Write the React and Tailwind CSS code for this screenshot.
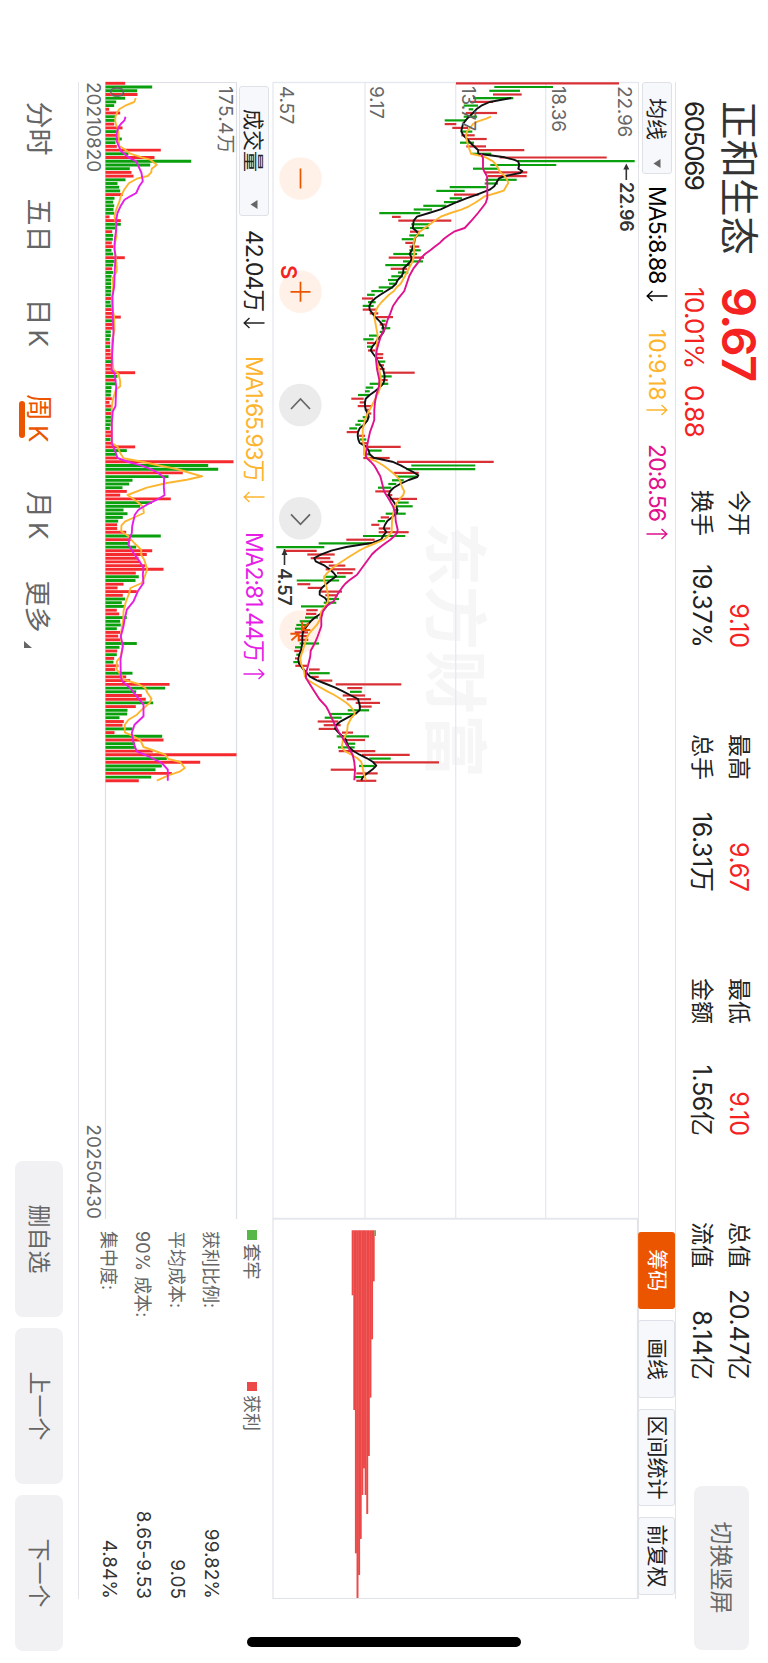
import React from "react";

const UP = "#d93036";
const DOWN = "#0a9f0d";

// one entry per week: [low, high, direction] in chart units
const CANDLES = `589-1078r 704-880g 689-781g 700-786r 640-761g 632-700r 612-655g 627-641g 618-712r 612-652g
555-620g 555-590r 578-625r 607-638g 605-645r 620-681r 601-643g 620-679r 655-794r 635-695g
720-1041r 775-1125g 692-890g 640-718g 675-803r 685-801r 677-771g 675-715g 570-680g 530-615g
583-657r 570-607g 553-590g 491-560g 462-517g 359-482g 397-423r 416-575r 455-510g 451-507g
451-480r 449-493g 426-462g 437-466r 450-479r 449-483g 401-472g 387-493r 430-490g 377-452g
393-442r 415-446g 395-430g 385-413g 388-410g 357-400g 335-370g 322-345g 307-340r 325-348g
309-342g 309-350r 330-356r 350-400r 366-378g 360-378r 365-392g 360-372g 328-352g 311-342g
322-345r 322-340g 325-348r 352-371r 350-370r 352-377g 355-373r 360-375r 372-465r 365-396g
365-384r 330-386g 318-341g 316-330g 295-328g 275-312r 300-318r 294-335r 318-330r 320-335r
309-325g 294-318g 287-303g 269-292g 261-295r 297-316r 300-320g 305-322r 325-423r 325-366g
315-330g 311-390r 412-702r 455-647g 440-647g 402-477r 411-472g 397-432g 386-410g 355-395g
347-395r 380-398r 390-472r 415-447g 408-459g 405-416g 378-438g 363-388r 354-376g 335-359r
357-392r 357-447r 310-437g 260-345r 177-330g 50-194g 75-171r 143-225r 153-212r 180-221r
207-257r 198-287r 232-279r 192-258g 111-238g 113-152r 144-188r 182-247r 197-235r 200-238g
192-230g 124-195g 140-174r 139-170r 136-175g 120-155g 110-145g 106-140g 105-145r 115-146r
118-146r 120-178g 106-126g 104-125r 110-122g 106-118r 101-120g 107-143r 148-180r 148-210g
155-177r 175-218r 228-425r 263-308r 271-306g 249-316r 261-334r 288-361r 297-336r 264-328g
210-285g 195-246g 174-236r 192-243r 177-229r 247-280r 231-328g 252-316r 258-287g 235-285g
237-347r 307-450r 329-393g 340-538r 298-345g 213-287r 290-354r 285-312g 290-350r`.split(/\s+/);

const VOLUMES = `375r 456g 411g 412r 375g 348g 342g 327r 360r 345g 347g 342r 367r 350g 350r 365g 346g 350r 482r 385g
463r 573g 450g 389g 394r 400r 376g 352g 357g 360g 368r 343g 339g 342g 340g 342g 328r 362r 362g 348g
336r 339g 338g 335r 339r 334g 339g 374r 343g 339g 336r 339g 334g 333g 333g 333g 333g 332g 334r 331g
334g 335r 336r 362r 338g 338r 338r 332g 332g 329g 330r 330g 331r 332r 334r 334g 333r 337r 405r 352g
348r 346g 334g 333g 332g 335r 328r 333r 334g 334r 333g 333g 332g 329g 334r 335r 331g 336r 405r 380g
350g 352r 700r 624g 654g 548r 505g 397g 387g 367g 380r 360r 512r 455g 420g 370g 382g 368g 354g 351r
351r 378r 482g 392r 388g 408g 456r 440r 415r 420r 435r 490r 407r 416g 406g 370r 352r 410r 368r 375g
365g 375g 350r 357r 380g 360g 362g 350g 360r 354r 360r 410g 358g 351r 350g 342r 340g 355r 345r 397g
378r 390r 508r 495g 408g 425r 437r 459g 407r 382g 381g 358g 371r 367r 397g 343r 486g 490r 405g 407g
458r 709r 500g 600r 485g 466g 515r 453g 416r`.split(/\s+/);

const MA5 = `85,755 92,718 97,690 108,665 119,650 130,640 141,628 152,618 163,610 174,607 185,605 197,611 208,622 219,632 230,643 241,655 252,656 257,690 263,735 270,762 275,775 285,779 297,776 304,788 310,782 319,735 326,718 338,711 350,704 360,690 375,652 386,620 397,592 408,567 419,543 430,508 441,472 453,462 464,461 475,459 484,470 492,476 500,470 508,465 519,464 530,460 542,456 553,450 564,456 575,453 586,442 597,431 608,431 619,426 631,414 642,409 653,398 664,380 675,362 686,347 697,335 709,329 720,330 731,338 742,347 753,358 764,368 775,371 786,372 798,364 809,354 820,347 831,338 842,333 853,341 865,350 876,355 887,363 898,370 909,373 920,375 931,374 942,371 953,360 964,347 976,330 987,318 998,316 1009,316 1020,318 1032,325 1042,327 1053,323 1065,313 1076,300 1087,295 1098,294 1109,296 1120,300 1131,320 1143,327 1154,330 1164,342 1176,398 1187,423 1198,443 1209,464 1217,476 1222,473 1231,447 1243,421 1254,402 1265,391 1276,387 1287,395 1298,403 1310,410 1321,413 1329,412 1343,397 1354,383 1365,376 1376,372 1387,380 1398,371 1409,365 1419,340 1432,260 1443,215 1454,185 1465,164 1475,168 1488,195 1499,210 1510,222 1520,230 1532,213 1543,200 1554,187 1565,180 1575,180 1585,196 1595,203 1605,204 1615,197 1632,183 1643,167 1654,154 1665,145 1676,136 1687,130 1699,128 1721,128 1743,124 1754,119 1770,116 1782,118 1795,128 1810,141 1821,151 1832,172 1843,200 1854,227 1865,250 1876,271 1888,295 1899,298 1910,301 1921,300 1932,288 1943,265 1955,243 1966,230 1977,226 1988,236 1999,247 2010,259 2021,262 2032,267 2044,281 2055,300 2066,322 2077,340 2088,350 2099,339 2110,324 2121,310 2132,305`;
const MA10 = `141,694 147,680 155,655 163,640 174,632 185,622 200,619 219,623 235,628 252,634 257,655 263,678 275,700 286,710 297,716 308,722 319,735 330,742 340,746 350,740 363,732 370,710 380,675 390,660 400,645 410,628 420,605 430,573 441,543 452,527 463,512 474,496 486,480 497,472 508,464 519,462 550,464 575,459 597,447 619,436 642,423 653,411 664,403 675,388 686,377 697,366 709,356 720,350 731,347 742,344 753,346 775,350 798,354 820,352 842,349 865,349 887,355 910,361 940,364 965,358 987,347 1009,336 1031,324 1053,315 1080,309 1110,309 1130,313 1155,313 1165,325 1176,352 1187,370 1198,385 1209,399 1220,411 1231,420 1243,424 1254,428 1265,434 1276,431 1287,421 1300,411 1315,404 1330,401 1354,397 1387,396 1398,387 1409,374 1420,349 1432,320 1443,298 1460,271 1480,240 1495,218 1515,198 1530,192 1550,200 1570,204 1588,206 1598,204 1610,197 1625,185 1650,180 1665,172 1685,154 1700,143 1721,136 1743,129 1765,122 1782,124 1800,132 1821,136 1832,146 1843,164 1854,183 1865,203 1876,224 1888,243 1899,260 1910,272 1921,281 1934,285 1945,275 1966,264 1988,262 2010,250 2032,246 2044,255 2055,275 2066,293 2077,305 2090,308 2110,312 2132,319`;
const MA20 = `252,664 265,670 297,670 308,675 320,682 340,683 385,683 400,678 412,669 430,655 452,636 475,615 486,583 497,567 508,552 519,541 530,527 542,512 553,496 564,485 575,478 597,461 619,449 642,441 664,434 686,416 709,400 731,392 753,383 775,377 798,364 820,357 842,351 870,349 898,352 930,359 950,358 976,350 998,346 1020,344 1050,344 1065,339 1087,331 1110,326 1130,322 1150,319 1163,319 1176,333 1187,343 1198,350 1209,356 1220,362 1243,368 1265,373 1276,380 1287,387 1298,393 1310,400 1330,407 1354,408 1380,414 1390,412 1398,405 1410,392 1421,377 1432,362 1443,348 1454,337 1477,320 1499,304 1515,292 1532,269 1543,256 1554,247 1570,236 1585,227 1595,222 1610,200 1625,190 1645,185 1670,185 1700,174 1721,165 1743,153 1760,152 1788,145 1810,139 1825,139 1843,150 1865,164 1888,179 1910,199 1925,207 1945,216 1966,226 1988,238 2010,252 2032,265 2055,279 2077,284 2100,286 2132,284`;
const VMA1 = `85,407 97,402 108,375 119,357 130,350 141,346 152,345 163,347 174,352 190,355 210,356 228,357 240,375 252,390 263,425 270,450 285,470 297,455 308,453 319,443 327,410 341,386 360,372 380,362 397,357 420,348 440,343 460,347 500,349 530,342 550,345 580,349 605,350 625,338 650,339 690,335 715,336 740,342 780,343 810,336 850,335 900,340 912,355 935,360 950,360 960,347 990,338 1010,335 1060,335 1120,336 1132,353 1150,360 1166,370 1177,430 1188,480 1198,530 1210,570 1220,606 1230,560 1240,500 1254,440 1276,382 1288,400 1299,415 1312,429 1330,431 1342,405 1355,375 1367,364 1385,363 1400,385 1420,402 1440,423 1455,423 1470,432 1498,441 1520,434 1540,425 1555,391 1570,387 1600,376 1625,370 1650,369 1680,364 1705,361 1730,368 1760,362 1775,350 1800,350 1815,362 1830,370 1843,415 1855,435 1870,442 1887,454 1900,448 1920,425 1935,410 1950,385 1965,374 1988,374 2000,400 2011,420 2032,430 2044,465 2055,495 2068,505 2077,540 2095,554 2105,540 2117,505 2133,470`;
const VMA2 = `141,376 152,373 163,362 174,354 190,350 215,350 230,356 245,363 263,385 275,408 290,415 310,424 335,428 350,417 370,408 380,390 390,373 410,361 430,352 450,348 480,348 510,344 540,343 560,346 600,344 650,342 680,337 740,338 790,340 850,336 900,334 910,343 950,348 1010,346 1025,338 1060,335 1120,335 1145,345 1165,352 1177,385 1188,425 1200,455 1210,475 1225,492 1250,491 1277,493 1290,470 1305,440 1320,415 1335,404 1370,396 1390,395 1410,387 1425,385 1450,400 1475,418 1495,430 1515,428 1540,430 1565,413 1595,400 1620,380 1650,373 1670,370 1700,362 1730,368 1770,361 1820,362 1835,366 1855,390 1880,410 1905,430 1940,430 1965,403 1990,395 2020,400 2045,410 2060,445 2080,485 2100,503 2133,503`;

const CHIPS = [286, 630, 1060, 1194, 1125, 1017, 885, 805, 885, 942, 768, 593, 418, 244];

const STATS = [
  [["今开", "9.10", true], ["换手", "19.37%"]],
  [["最高", "9.67", true], ["总手", "16.31万"]],
  [["最低", "9.10", true], ["金额", "1.56亿"]],
  [["总值", "20.47亿"], ["流值", "8.14亿"]],
];

const COSTS = [
  ["获利比例:", "99.82%"],
  ["平均成本:", "9.05"],
  ["90% 成本:", "8.65-9.53"],
  ["集中度:", "4.84%"],
];

// chart units are thirds of a pixel
const timeX = (t) => (t - 37) / 3;
const barX = (i) => timeX(41 + 11.13 * i);
const priceY = (v) => 365 - (v - 40) / 3;
const volY = (v) => 131.5 - (v - 316) / 3;
const toPoints = (data, y) =>
  data
    .split(" ")
    .map((p) => p.split(",").map(Number))
    .map(([t, v]) => `${timeX(t).toFixed(1)},${y(v).toFixed(1)}`)
    .join(" ");

const Line = ({ data, y, color }) => (
  <polyline points={toPoints(data, y)} fill="none" stroke={color} strokeWidth="1.9" strokeLinejoin="round" />
);

const Arrow = ({ up }) => (
  <svg width="12" height="22" viewBox="0 0 12 22" className={up ? "" : "rotate-180"} fill="none" stroke="currentColor" strokeWidth="1.4">
    <path d="M6 21.5V1.5M1 6.5L6 1.2l5 5.3" />
  </svg>
);

const Indicator = ({ children, up, className }) => (
  <span className={`flex shrink-0 items-center justify-between text-[23px] ${className}`}>
    <span className="pt-px">{children}</span>
    <Arrow up={up} />
  </span>
);

const Picker = ({ children, className }) => (
  <button className={`flex h-[30px] shrink-0 items-center justify-between rounded-[3px] border border-[#dfe1e8] bg-[#f7f8fb] text-[21px] text-[#222] ${className}`}>
    <span className="pt-px">{children}</span>
    <svg width="9" height="8" viewBox="0 0 9 8" fill="#666">
      <path d="M0 .5h9L4.5 7.5z" />
    </svg>
  </button>
);

const Tool = ({ children, active, className }) => (
  <button
    className={`flex h-[37px] items-center justify-center rounded-[3px] text-[21px] ${
      active ? "bg-[#eb5500] text-white" : "border border-[#dfe1e8] bg-[#f7f8fb] text-[#222]"
    } ${className}`}
  >
    {children}
  </button>
);

const Header = () => (
  <header className="flex h-[92px] pl-[101px]">
    <div className="w-[389px]">
      <div className="flex h-[58px] items-center">
        <h1 className="w-[186px] text-[38.5px] leading-[58px] text-[#333]">正和生态</h1>
        <span className="text-[47px] font-semibold leading-[60px] tracking-[-1.5px] text-[#f52222]">9.67</span>
      </div>
      <div className="flex h-[32px] items-center text-[26px] leading-[32px] tracking-[-0.7px] text-[#f52222]">
        <span className="w-[186px] tracking-[-1.4px] text-[#222]">605069</span>
        <span className="w-[98px]">10.01%</span>
        <span>0.88</span>
      </div>
    </div>
    <div className="flex gap-[86.5px] pt-[11px] text-[25px] tracking-[-0.4px] text-[#222]">
      {STATS.map((col, i) => (
        <div key={i} className="w-[157.5px]">
          {col.map(([label, value, red]) => (
            <div key={label} className="flex h-[37px] items-center justify-between leading-[37px]">
              <span className="text-[23px] tracking-normal">{label}</span>
              <span className={red ? "text-[#f52222]" : ""}>{value}</span>
            </div>
          ))}
        </div>
      ))}
    </div>
    <button className="ml-[106px] mt-[19px] h-[55px] w-[164px] rounded-[8px] bg-[#f1f1f3] pt-px text-[23px] text-[#666]">切换竖屏</button>
  </header>
);

const IndicatorBar = () => (
  <div className="ml-[82px] flex h-[38px] w-[1517px] items-center justify-between border-y border-[#e3e4e8]">
    <div className="flex items-center">
      <Picker className="w-[92px] pl-[15px] pr-[5px]">均线</Picker>
      <Indicator className="ml-[12px] w-[116px] tracking-[-1px] text-black">MA5:8.88</Indicator>
      <Indicator up className="ml-[27px] w-[87px] tracking-[-0.1px] text-[#fdb52f]">10:9.18</Indicator>
      <Indicator up className="ml-[28px] w-[96px] tracking-[-0.9px] text-[#e0118c]">20:8.56</Indicator>
    </div>
    <div className="flex gap-[11px] pr-[4px]">
      <Tool active className="w-[77.5px]">筹码</Tool>
      <Tool className="w-[78px]">画线</Tool>
      <Tool className="w-[97px]">区间统计</Tool>
      <Tool className="w-[78px]">前复权</Tool>
    </div>
  </div>
);

const KLine = () => (
  <svg width="1137" height="365" className="block overflow-visible">
    <text x="440" y="206" fontSize="64" fontWeight="700" fill="#f6f6f6">东方财富</text>
    <g stroke="#e6e9ef" strokeWidth="1.3">
      <path d="M0 92.3H1137M0 182.3H1137M0 273H1137M0 365H1137M.5 0V365M1136.5 0V365" />
    </g>
    <g fill="#fff1e8">
      <circle cx="96.5" cy="337.5" r="21.3" />
      <circle cx="209.8" cy="337.5" r="21.3" />
      <circle cx="549.5" cy="337.5" r="21.3" />
    </g>
    <g fill="#ebebeb">
      <circle cx="323" cy="337.7" r="21.3" />
      <circle cx="436.3" cy="337.7" r="21.3" />
    </g>
    <g fill="none" stroke="#eb5500" strokeWidth="1.7">
      <path d="M86.5 337.5h20M199.8 337.5h20M209.8 327.5v20" />
    </g>
    <g fill="none" stroke="#666" strokeWidth="1.7">
      <path d="M327 347l-10-9.5 10-9.5M432.3 347l10-9.5-10-9.5" />
    </g>
    {CANDLES.map((c, i) => {
      const [low, high] = c.slice(0, -1).split("-").map(Number);
      return (
        <path
          key={i}
          d={`M${barX(i).toFixed(1)} ${priceY(low).toFixed(1)}V${priceY(high).toFixed(1)}`}
          stroke={c.endsWith("r") ? UP : DOWN}
          strokeWidth="2.2"
        />
      );
    })}
    <Line data={MA5} y={priceY} color="#111" />
    <Line data={MA10} y={priceY} color="#fdb52f" />
    <Line data={MA20} y={priceY} color="#e0118c" />
    <g fill="none" stroke="#eb5500" strokeWidth="1.9">
      <path d="M539.4 336H548V327.6M541 329.3L548 336M559.4 339.3H551.7V347.6M558.4 346.6L551.7 339.3" />
    </g>
    <g fontSize="19" fill="#666" letterSpacing="-0.2">
      <text x="4" y="20.5">22.96</text>
      <text x="4" y="86" letterSpacing="-0.4">18.36</text>
      <text x="4" y="176.5">13.77</text>
      <text x="4" y="268">9.17</text>
      <text x="4" y="358">4.57</text>
    </g>
    <g fontSize="18" fontWeight="600" fill="#333" letterSpacing="-0.3">
      <text x="100" y="18.3">22.96</text>
      <text x="486" y="360">4.57</text>
    </g>
    <g stroke="#333" fill="#333" strokeWidth="1.6">
      <path d="M84 11.7h14M467 353.5h16" />
      <path d="M81.5 11.7l6-3v6zM467 353.5l6-3v6z" stroke="none" />
    </g>
    <text x="183" y="357" fontSize="22" fontWeight="600" fill="#f52222">S</text>
  </svg>
);

const VolumeBar = () => (
  <div className="flex h-[36px] items-center pl-[4px] pt-[2px]">
    <Picker className="w-[130px] pl-[22px] pr-[6px]">成交量</Picker>
    <Indicator className="ml-[14px] w-[99px] tracking-[-1px] text-[#222]">42.04万</Indicator>
    <Indicator className="ml-[27px] w-[147px] tracking-[-1.2px] text-[#fdb52f]">MA1:65.93万</Indicator>
    <Indicator up className="ml-[29px] w-[148px] tracking-[-1.05px] text-[#e61ee6]">MA2:81.44万</Indicator>
  </div>
);

const Volume = () => (
  <svg width="1137" height="132" className="block overflow-visible">
    <path d="M0 .5H1137M0 131.5H1137M.5 0V131.5" stroke="#dddfe6" strokeWidth="1.2" />
    {VOLUMES.map((v, i) => (
      <path
        key={i}
        d={`M${barX(i).toFixed(1)} 131.5V${volY(parseInt(v, 10)).toFixed(1)}`}
        stroke={v.endsWith("r") ? "#f52a2e" : DOWN}
        strokeWidth="2.9"
      />
    ))}
    <Line data={VMA1} y={volY} color="#fdb52f" />
    <Line data={VMA2} y={volY} color="#e61ee6" />
    <g fontSize="19" fill="#666">
      <text x="4" y="18.5" letterSpacing="0.3">175.4万</text>
      <text x="4" y="127">0</text>
    </g>
  </svg>
);

const ChipPanel = () => (
  <aside className="w-[380px]">
    <svg width="380" height="365" className="block overflow-visible">
      <path d="M0 .5H379.5V365H0z" fill="none" stroke="#dfe3ea" strokeWidth="1.2" />
      {CHIPS.map((end, i) => (
        <rect key={i} x="11.3" y={priceY(277 + 4.86 * (i + 1)).toFixed(2)} width={(end - 91) / 3} height="1.95" fill="#ec4848" />
      ))}
      <rect x="11.3" y="262" width="5.7" height="1.5" fill="#56b947" />
    </svg>
    <div className="flex h-[42px] items-center pl-[11px] text-[18px] text-[#666]">
      <i className="mr-[4px] size-[9.5px] bg-[#56b947]" />
      <span className="w-[138px]">套牢</span>
      <i className="mr-[4px] size-[9.5px] bg-[#ec4848]" />
      <span>获利</span>
    </div>
    <dl className="pl-[12px] pt-[3px]">
      {COSTS.map(([label, value]) => (
        <div key={label} className="flex h-[34.2px] items-center justify-between">
          <dt className="text-[18px] text-[#666]">{label}</dt>
          <dd className="text-[19px] text-[#333]">{value}</dd>
        </div>
      ))}
    </dl>
  </aside>
);

const KTab = ({ children }) => (
  <>
    {children}
    <span className="ml-[4px] text-[26px]">K</span>
  </>
);

const Footer = () => (
  <footer className="flex h-[78px] items-center pl-[101.5px] text-[27px] text-[#666]">
    <nav className="flex w-[1059.5px] items-center pt-[3px]">
      <span className="w-[97px]">分时</span>
      <span className="w-[100px]">五日</span>
      <span className="w-[95.5px]">
        <KTab>日</KTab>
      </span>
      <span className="relative w-[97px] text-[#eb5500]">
        <KTab>周</KTab>
        <i className="absolute left-[7px] top-[33px] h-[5.5px] w-[37px] rounded-full bg-[#eb5500]" />
      </span>
      <span className="w-[89.5px]">
        <KTab>月</KTab>
      </span>
      <span className="text-[26px]">更多</span>
      <svg width="7" height="8" viewBox="0 0 7 8" fill="#666" className="ml-[8px] mt-[18px]">
        <path d="M7 0v8H0z" />
      </svg>
    </nav>
    <div className="flex gap-[11px]">
      {["删自选", "上一个", "下一个"].map((label) => (
        <button key={label} className="h-[48px] w-[156px] rounded-[8px] bg-[#f1f1f3] pt-px text-[23px]">
          {label}
        </button>
      ))}
    </div>
  </footer>
);

export default function App() {
  return (
    <div className="h-[1663px] w-[768px] overflow-hidden bg-white">
      {/* landscape screen, turned a quarter clockwise */}
      <div className="relative h-[768px] w-[1663px] origin-top-left bg-white font-['Inter','Noto_Sans_CJK_SC',sans-serif] [transform:translateX(768px)_rotate(90deg)]">
        <Header />
        <IndicatorBar />
        <main className="ml-[82px] flex h-[560px] w-[1517px] border-b border-[#e3e4e8]">
          <section className="w-[1137px]">
            <KLine />
            <VolumeBar />
            <Volume />
            <div className="flex h-[24px] items-center justify-between text-[19px] text-[#666]">
              <span>20210820</span>
              <span>20250430</span>
            </div>
          </section>
          <ChipPanel />
        </main>
        <Footer />
        <div className="absolute left-[1637px] top-[247px] h-[274px] w-[10px] rounded-full bg-black" />
      </div>
    </div>
  );
}
